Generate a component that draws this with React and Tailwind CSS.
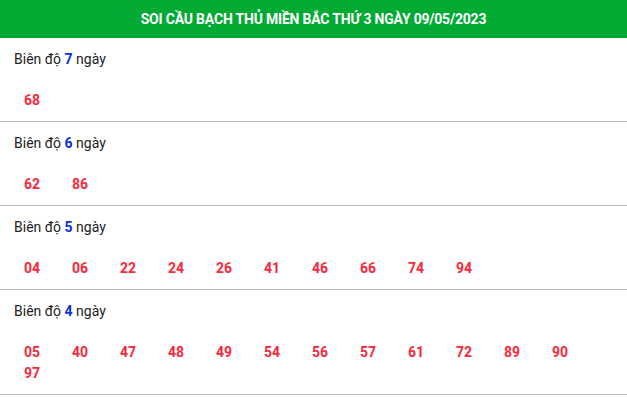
import React from 'react';

const groups = [
  { days: 7, nums: ['68'] },
  { days: 6, nums: ['62', '86'] },
  { days: 5, nums: ['04', '06', '22', '24', '26', '41', '46', '66', '74', '94'] },
  { days: 4, nums: ['05', '40', '47', '48', '49', '54', '56', '57', '61', '72', '89', '90', '97'] },
];

export default function App() {
  return (
    <div className="w-[627px] min-h-[397px] bg-white font-['Roboto',sans-serif]">
      {/* Header */}
      <div className="h-[38px] bg-[#00aa33] flex items-center justify-center">
        <h1 className="text-white font-bold text-[14px] tracking-[-0.2px]">
          SOI CẦU BẠCH THỦ MIỀN BẮC THỨ 3 NGÀY 09/05/2023
        </h1>
      </div>

      {groups.map((g) => (
        <div key={g.days} className="border-b border-[#bdbdbd] pt-[11px] pb-[10px]">
          <div className="pl-[14px] text-[14px] leading-[20px] text-[#222]">
            Biên độ <span className="font-bold text-[#0a2ed8]">{g.days}</span> ngày
          </div>
          <div className="mt-[21px] pl-[24px] flex flex-wrap">
            {g.nums.map((n) => (
              <span key={n} className="w-[48px] text-[14px] leading-[21px] font-bold text-[#f7283a]">
                {n}
              </span>
            ))}
          </div>
        </div>
      ))}
    </div>
  );
}
